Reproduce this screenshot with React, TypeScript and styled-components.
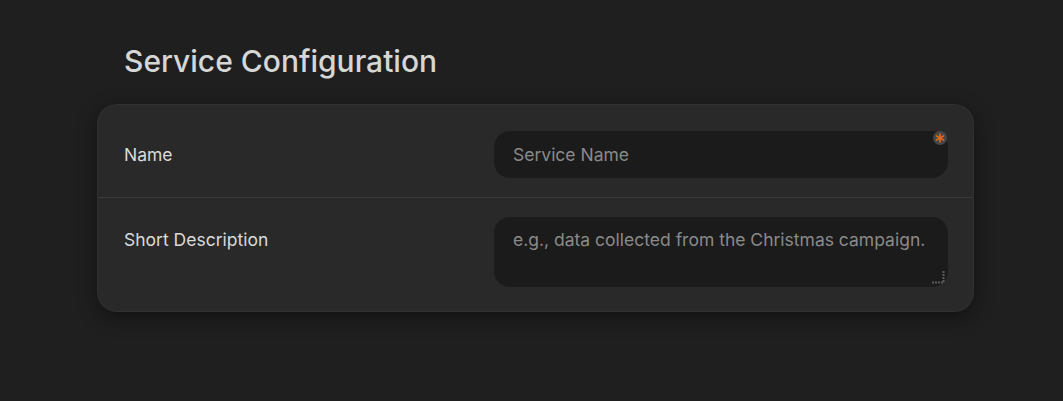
import React from "react";
import styled, { createGlobalStyle } from "styled-components";

const Global = createGlobalStyle`
  html, body {
    margin: 0;
    padding: 0;
    background: #1f1f1f;
    font-family: Inter, "Noto Sans", "Liberation Sans", sans-serif;
    color-scheme: dark;
  }
  * { box-sizing: border-box; }
`;

const Page = styled.div`
  min-height: 401px;
  padding: 42px 0 0 97px;
`;

const Section = styled.section`
  width: 877px;
`;

const Heading = styled.h2`
  margin: 0 0 24px 27px;
  font-size: 30px;
  line-height: 38px;
  font-weight: 500;
  color: #d6d6d6;
  letter-spacing: 0;
`;

const Card = styled.div`
  background: #292929;
  border: 1px solid rgba(255, 255, 255, 0.035);
  border-radius: 20px;
  box-shadow: 0 5px 20px rgba(0, 0, 0, 0.45);
`;

const Row = styled.div<{ $pt: number; $pb: number; $divider?: boolean }>`
  display: grid;
  grid-template-columns: 370px 1fr;
  align-items: ${(p) => (p.$divider ? "center" : "start")};
  padding: ${(p) => p.$pt}px 25px ${(p) => p.$pb}px 26px;
  border-bottom: ${(p) => (p.$divider ? "1px solid #3a3a3a" : "none")};
`;

const Label = styled.label<{ $pt?: number }>`
  font-size: 17.5px;
  line-height: 24px;
  color: #dadada;
  padding-top: ${(p) => p.$pt ?? 0}px;
`;

const FieldWrap = styled.div`
  position: relative;
`;

const TextInput = styled.input`
  display: block;
  width: 100%;
  height: 47px;
  border: none;
  outline: none;
  border-radius: 16px;
  background: #1b1b1b;
  color: #dadada;
  font-family: inherit;
  font-size: 17.5px;
  padding: 0 19px;
  &::placeholder {
    color: #8a8a8a;
  }
`;

const TextArea = styled.textarea`
  display: block;
  width: 100%;
  height: 70px;
  border: none;
  outline: none;
  border-radius: 16px;
  background: #1b1b1b;
  color: #dadada;
  font-family: inherit;
  font-size: 17.5px;
  line-height: 24px;
  padding: 11px 19px;
  resize: none;
  &::placeholder {
    color: #8a8a8a;
  }
`;

const Resizer = styled.svg`
  position: absolute;
  right: 2px;
  bottom: 2px;
  pointer-events: none;
`;

const Required = styled.span`
  position: absolute;
  top: 0;
  right: 1px;
  width: 14px;
  height: 14px;
  border-radius: 50%;
  background: #464646;
  display: flex;
  align-items: center;
  justify-content: center;
`;

export default function App() {
  return (
    <>
      <Global />
      <Page>
        <Section>
          <Heading>Service Configuration</Heading>
          <Card>
            <Row $pt={26} $pb={19} $divider>
              <Label htmlFor="svc-name">Name</Label>
              <FieldWrap>
                <TextInput id="svc-name" placeholder="Service Name" />
                <Required>
                  <svg width="10" height="10" viewBox="0 0 10 10">
                    <g stroke="#e0671c" strokeWidth="1.6" strokeLinecap="round">
                      <line x1="5" y1="1" x2="5" y2="9" />
                      <line x1="1.5" y1="3" x2="8.5" y2="7" />
                      <line x1="1.5" y1="7" x2="8.5" y2="3" />
                    </g>
                  </svg>
                </Required>
              </FieldWrap>
            </Row>
            <Row $pt={19} $pb={24}>
              <Label htmlFor="svc-desc" $pt={11}>
                Short Description
              </Label>
              <FieldWrap>
                <TextArea
                  id="svc-desc"
                  placeholder="e.g., data collected from the Christmas campaign."
                />
                <Resizer width="15" height="15" viewBox="0 0 15 15">
                  <path
                    d="M12.5 1 V12.5 H1"
                    fill="none"
                    stroke="#5c5c5c"
                    strokeWidth="2"
                    strokeDasharray="2 1"
                  />
                </Resizer>
              </FieldWrap>
            </Row>
          </Card>
        </Section>
      </Page>
    </>
  );
}
